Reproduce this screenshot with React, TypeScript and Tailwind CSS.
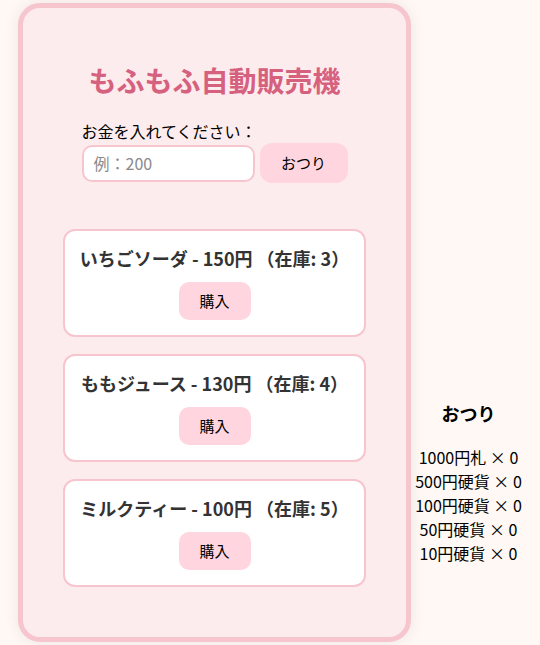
import { useState } from "react";

const PRODUCTS = [
  { name: "いちごソーダ", price: 150, stock: 3 },
  { name: "ももジュース", price: 130, stock: 4 },
  { name: "ミルクティー", price: 100, stock: 5 },
];

const CHANGE = [
  { label: "1000円札", count: 0 },
  { label: "500円硬貨", count: 0 },
  { label: "100円硬貨", count: 0 },
  { label: "50円硬貨", count: 0 },
  { label: "10円硬貨", count: 0 },
];

export default function App() {
  const [money, setMoney] = useState("");

  return (
    <div
      className="flex min-h-screen w-full items-center bg-[#fff8f4] text-black"
      style={{ fontFamily: '"Noto Sans CJK JP", "Noto Sans", sans-serif' }}
    >
      {/* Vending machine body */}
      <div className="ml-[18px] flex h-[639px] w-[393px] shrink-0 flex-col rounded-[22px] border-[5px] border-[#f7c5cd] bg-[#fdecee] px-[40px] pt-[52px] shadow-[0_0_16px_rgba(0,0,0,0.08)]">
        <h1 className="text-center text-[28px] font-bold leading-[40px] text-[#d6617f]">
          もふもふ自動販売機
        </h1>

        <div className="mx-auto mt-[19px] w-[266px]">
          <div className="text-[16px] leading-[24px]">お金を入れてください：</div>
          <div className="flex items-center gap-[5px]">
            <input
              value={money}
              onChange={(e) => setMoney(e.target.value)}
              placeholder="例：200"
              className="h-[37px] w-[173px] rounded-[10px] border-2 border-[#f7c5cd] bg-white px-[10px] text-[16px] outline-none placeholder:text-[#8a8a8a]"
            />
            <button className="h-[40px] w-[88px] rounded-[12px] bg-[#ffd6df] text-[15px]">
              おつり
            </button>
          </div>
        </div>

        <div className="mt-[46px] flex flex-col gap-[17px]">
          {PRODUCTS.map((p) => (
            <div
              key={p.name}
              className="flex h-[108px] flex-col items-center rounded-[12px] border-2 border-[#f7c5cd] bg-white pt-[14px]"
            >
              <div className="text-[18px] font-bold leading-[27px] text-[#333]">
                {p.name} - {p.price}円 （在庫: {p.stock}）
              </div>
              <button className="mt-[10px] h-[38px] w-[72px] rounded-[10px] bg-[#ffd6df] text-[15px]">
                購入
              </button>
            </div>
          ))}
        </div>
      </div>

      {/* Change display */}
      <div className="mt-[320px] flex flex-1 flex-col items-center pr-[14px]">
        <h2 className="text-[18px] font-bold leading-[27px]">おつり</h2>
        <ul className="mt-[18px] text-center text-[16px] leading-[24px]">
          {CHANGE.map((c) => (
            <li key={c.label}>
              {c.label} × {c.count}
            </li>
          ))}
        </ul>
      </div>
    </div>
  );
}
